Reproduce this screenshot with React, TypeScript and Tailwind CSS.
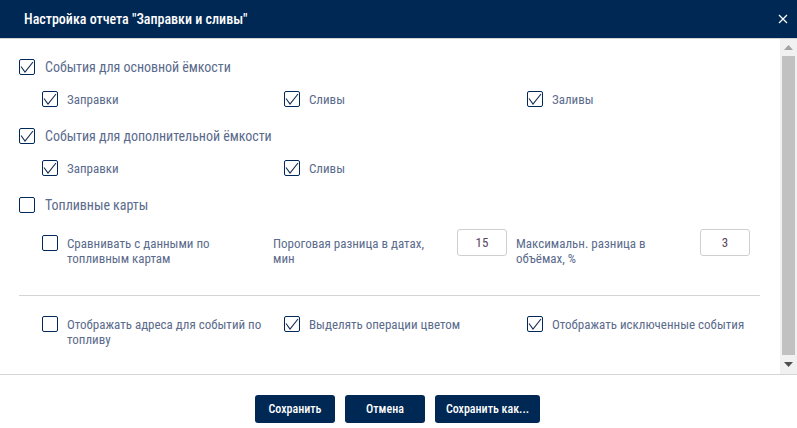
import React from "react";

const sub = "text-[13px] leading-[15px] text-[#5b6b8c] [font-stretch:75%]";
const main = "text-[14px] leading-[15px] text-[#5b6b8c] [font-stretch:75%] tracking-[-0.04px]";

function Check({ checked, label, strong }: { checked?: boolean; label: string; strong?: boolean }) {
  return (
    <div className="flex items-start">
      <div className="w-4 h-4 shrink-0 rounded-[2px] border border-[#00285a] bg-white flex items-center justify-center">
        {checked && (
          <svg width="14" height="14" viewBox="0 0 14 14" fill="none">
            <path d="M1 6.5 L5 12 L13 2" stroke="#12294d" strokeWidth="1.1" />
          </svg>
        )}
      </div>
      <span className={strong ? `ml-[10px] pt-px ${main}` : `ml-[9px] pt-px ${sub}`}>{label}</span>
    </div>
  );
}

function Num({ value }: { value: string }) {
  return (
    <div className="w-[50px] h-[27px] shrink-0 rounded-[3px] border border-[#cfcfcf] flex items-center justify-center pt-px text-[13px] [font-stretch:75%] text-[#5a4560]">
      {value}
    </div>
  );
}

function Btn({ label, w }: { label: string; w: string }) {
  return (
    <button className={`${w} h-[28px] rounded-[3px] bg-[#002855] text-white text-[12px] font-medium [font-stretch:75%]`}>{label}</button>
  );
}

export default function App() {
  return (
    <div className="w-[797px] h-[428px] bg-white overflow-hidden flex flex-col font-['Roboto',sans-serif]">
      <div className="h-[38px] shrink-0 bg-[#002855] flex items-center justify-between pl-6 pr-[9px]">
        <span className="text-white text-[14px] leading-[16px] font-medium [font-stretch:75%]">Настройка отчета "Заправки и сливы"</span>
        <svg width="10" height="10" viewBox="0 0 10 10" fill="none">
          <path d="M1 1 L9 9 M9 1 L1 9" stroke="#fff" strokeWidth="1.2" />
        </svg>
      </div>
      <div className="h-[337px] shrink-0 flex border-y border-[#d4d4d4]">
        <div className="flex-1 pl-[19px] pt-5">
          <Check strong checked label="События для основной ёмкости" />
          <div className="grid grid-cols-[242px_243px_243px] ml-[23px] mt-4">
            <Check checked label="Заправки" />
            <Check checked label="Сливы" />
            <Check checked label="Заливы" />
          </div>
          <div className="mt-[21px]"><Check strong checked label="События для дополнительной ёмкости" /></div>
          <div className="grid grid-cols-[242px_243px_243px] ml-[23px] mt-4">
            <Check checked label="Заправки" />
            <Check checked label="Сливы" />
          </div>
          <div className="mt-[21px]"><Check strong label="Топливные карты" /></div>
          <div className="grid grid-cols-[242px_243px_243px] ml-[23px] mt-[16px]">
            <div className="pt-[6px] pr-8"><Check label="Сравнивать с данными по топливным картам" /></div>
            <div className="-ml-[11px] flex items-start pr-[20px]">
              <span className={`flex-1 pt-[7px] pr-4 ${sub}`}>Пороговая разница в датах, мин</span>
              <Num value="15" />
            </div>
            <div className="-ml-[11px] flex items-start pr-[20px] w-[254px]">
              <span className={`flex-1 pt-[7px] pr-4 ${sub}`}>Максимальн. разница в объёмах, %</span>
              <Num value="3" />
            </div>
          </div>
          <div className="h-px w-[741px] bg-[#d4d4d4] mt-[29px]" />
          <div className="grid grid-cols-[242px_243px_243px] ml-[23px] mt-5">
            <Check label="Отображать адреса для событий по топливу" />
            <Check checked label="Выделять операции цветом" />
            <Check checked label="Отображать исключенные события" />
          </div>
        </div>
        <div className="w-[17px] shrink-0 bg-[#f1f1f1] flex flex-col">
          <div className="h-[17px] flex items-center justify-center">
            <svg width="9" height="5" viewBox="0 0 9 5"><path d="M4.5 0 L9 5 L0 5 Z" fill="#a3a3a3" /></svg>
          </div>
          <div className="flex-1 w-[13px] ml-[2px] bg-[#c1c1c1]" />
          <div className="h-[19px] flex items-center justify-center">
            <svg width="9" height="5" viewBox="0 0 9 5"><path d="M0 0 L9 0 L4.5 5 Z" fill="#505050" /></svg>
          </div>
        </div>
      </div>
      <div className="flex justify-center gap-[10px] pt-5 pr-[2px]">
        <Btn label="Сохранить" w="w-[80px]" />
        <Btn label="Отмена" w="w-[80px]" />
        <Btn label="Сохранить как..." w="w-[105px]" />
      </div>
    </div>
  );
}
